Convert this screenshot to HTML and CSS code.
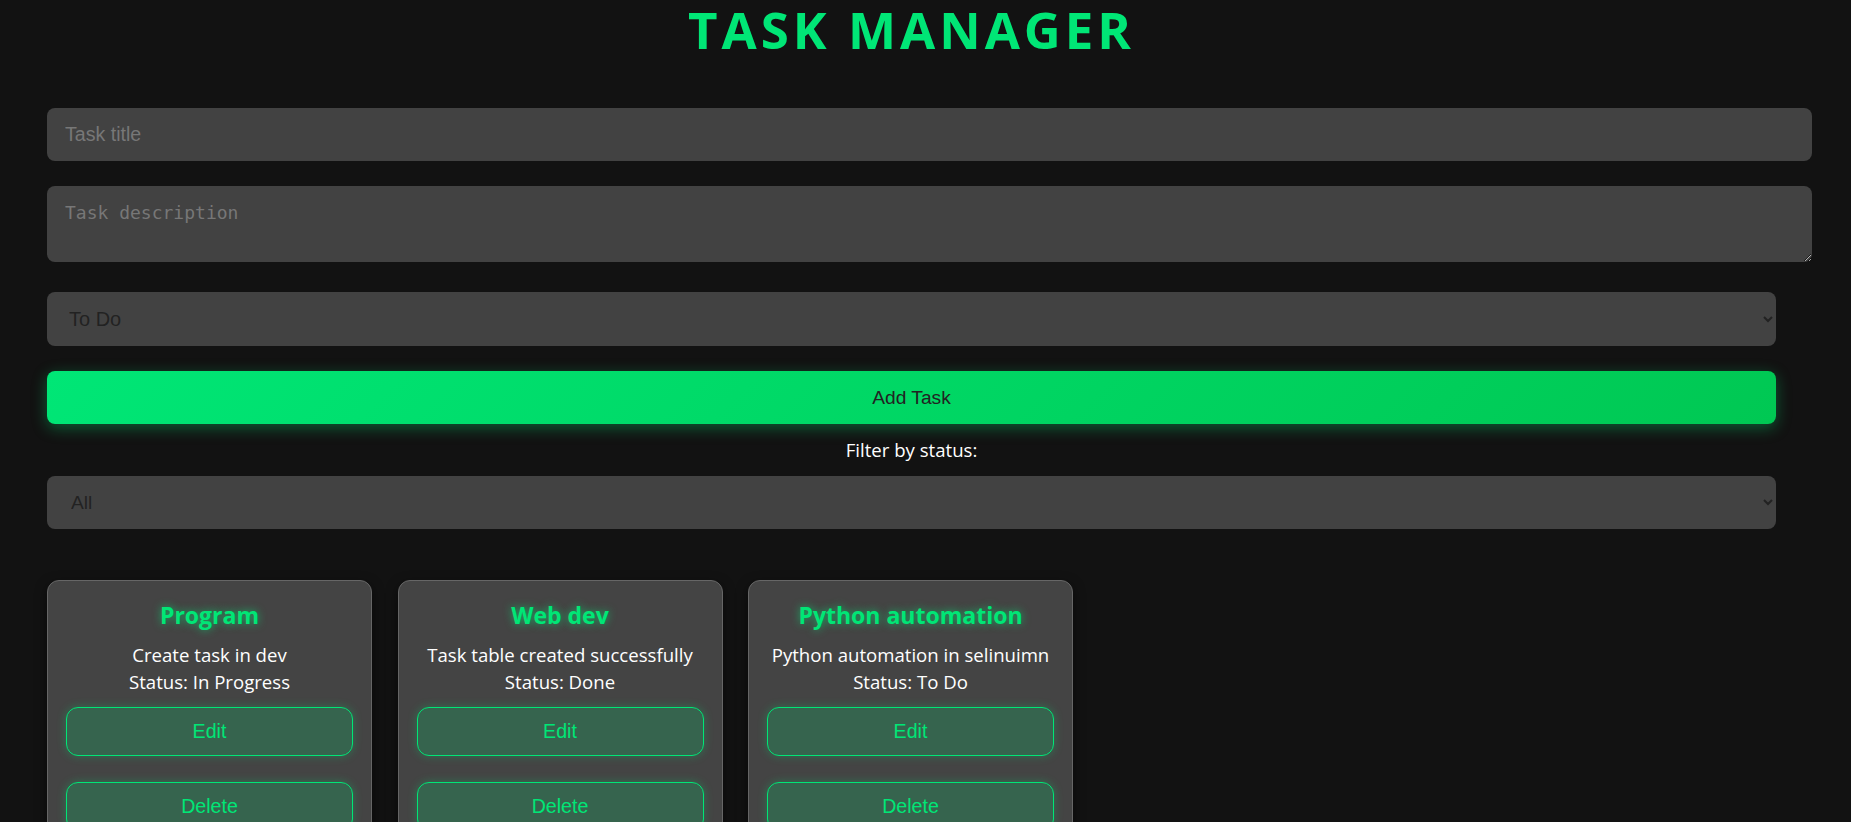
FILE: index.html
```html
<!DOCTYPE html>
<html lang="en">
<head>
<meta charset="utf-8">
<title>Task Manager</title>
<link rel="stylesheet" href="styles.css">
</head>
<body>
<div class="app">
  <h1 class="app-title">TASK MANAGER</h1>
  <form class="task-form">
    <input class="field field-title" type="text" placeholder="Task title">
    <textarea class="field field-desc" placeholder="Task description"></textarea>
    <select class="select select-status">
      <option>To Do</option>
      <option>In Progress</option>
      <option>Done</option>
    </select>
    <button type="button" class="add-btn">Add Task</button>
  </form>
  <label class="filter-label">Filter by status:</label>
  <select class="select select-filter">
    <option>All</option>
    <option>To Do</option>
    <option>In Progress</option>
    <option>Done</option>
  </select>
  <div class="task-list">
    <div class="task-card">
      <h3 class="task-name">Program</h3>
      <p class="task-desc">Create task in dev<br>Status: In Progress</p>
      <button type="button" class="card-btn">Edit</button>
      <button type="button" class="card-btn">Delete</button>
    </div>
    <div class="task-card">
      <h3 class="task-name">Web dev</h3>
      <p class="task-desc">Task table created successfully<br>Status: Done</p>
      <button type="button" class="card-btn">Edit</button>
      <button type="button" class="card-btn">Delete</button>
    </div>
    <div class="task-card">
      <h3 class="task-name">Python automation</h3>
      <p class="task-desc">Python automation in selinuimn<br>Status: To Do</p>
      <button type="button" class="card-btn">Edit</button>
      <button type="button" class="card-btn">Delete</button>
    </div>
  </div>
</div>
</body>
</html>
```
FILE: styles.css
```css
html, body {
  margin: 0;
  padding: 0;
  background: #121212;
}
body {
  font-family: "Open Sans", "Noto Sans", sans-serif;
  color: #ffffff;
}
.app {
  width: 1729px;
  padding-left: 47px;
}
.app-title {
  margin: 3px 0 53px;
  text-align: center;
  font-size: 51px;
  line-height: 52px;
  font-weight: 700;
  letter-spacing: 4px;
  color: #00e676;
}
.task-form {
  display: flex;
  flex-direction: column;
  align-items: flex-start;
  margin: 0;
}
.field {
  display: block;
  box-sizing: content-box;
  width: 100%;
  padding: 0 18px;
  border: none;
  border-radius: 8px;
  background: #424242;
  color: #eeeeee;
  outline: none;
}
.field::placeholder {
  color: #777777;
}
.field-title {
  height: 53px;
  font-family: "Liberation Sans", Arial, sans-serif;
  font-size: 19.6px;
}
.field-desc {
  margin-top: 25px;
  height: 44px;
  padding-top: 16px;
  padding-bottom: 16px;
  font-family: "DejaVu Sans Mono", monospace;
  font-size: 18px;
  resize: vertical;
}
.select {
  display: block;
  box-sizing: border-box;
  width: 100%;
  border: none;
  border-radius: 8px;
  background-color: #424242;
  color: #222222;
  font-family: "Liberation Sans", Arial, sans-serif;
  font-size: 19.2px;
  outline: none;
}
.select-status {
  margin-top: 30px;
  height: 54px;
  padding: 0 10px 0 18px;
  font-size: 20px;
}
.add-btn {
  margin-top: 25px;
  width: 100%;
  height: 53px;
  border: none;
  border-radius: 8px;
  background: linear-gradient(135deg, #00e676, #00c853);
  color: #222222;
  font-family: "Liberation Sans", Arial, sans-serif;
  font-size: 19.2px;
  box-shadow: 0 4px 15px rgba(0, 230, 118, 0.35);
  cursor: pointer;
}
.filter-label {
  display: block;
  margin: 13px 0;
  text-align: center;
  font-size: 18.6px;
  line-height: 26px;
  color: #ffffff;
}
.select-filter {
  height: 53px;
  padding: 0 10px 0 20px;
}
.task-list {
  display: flex;
  flex-wrap: wrap;
  gap: 25.5px;
  margin-top: 51px;
}
.task-card {
  box-sizing: border-box;
  width: 325px;
  padding: 18px;
  border: 1px solid #666666;
  border-radius: 12px;
  background: #444444;
  text-align: center;
  box-shadow: 0 4px 12px rgba(0, 0, 0, 0.5);
}
.task-name {
  margin: 0;
  font-size: 23px;
  line-height: 32px;
  font-weight: 700;
  color: #00e676;
  text-shadow: 0 0 8px rgba(0, 230, 118, 0.7);
}
.task-desc {
  margin: 10px 0 11px;
  font-size: 18.6px;
  line-height: 27.3px;
  color: #ffffff;
}
.card-btn {
  display: block;
  width: 100%;
  height: 49px;
  margin-bottom: 26px;
  border: 1px solid #00e676;
  border-radius: 12px;
  background: rgba(0, 230, 118, 0.2);
  color: #00e676;
  font-family: "Liberation Sans", Arial, sans-serif;
  font-size: 19.6px;
  box-shadow: 0 0 10px rgba(0, 230, 118, 0.3);
  cursor: pointer;
}
```
